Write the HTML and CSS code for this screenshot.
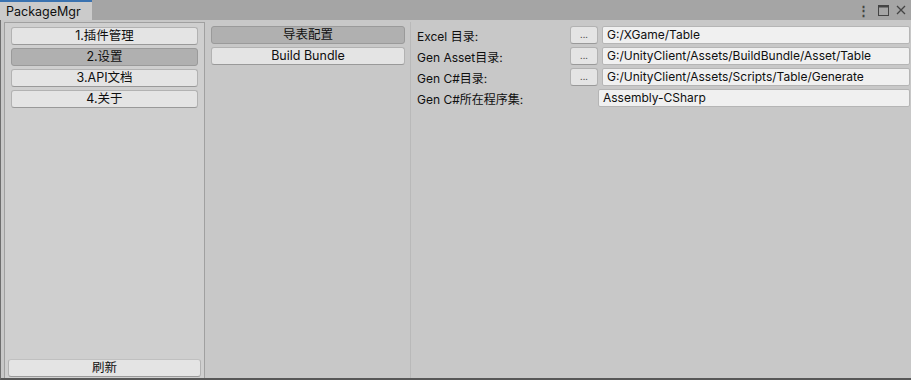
FILE: index.html
```html
<!DOCTYPE html>
<html lang="zh-CN">
<head>
    <meta charset="UTF-8">
    <title>PackageMgr</title>
    <link rel="stylesheet" href="styles.css">
</head>
<body>
    <div class="window">
        <div class="tab-bar">
            <div class="tab">PackageMgr</div>
            <div class="tab-tools">
                <span class="tool-dots">⋮</span>
                <svg class="tool-icon" width="11" height="11" viewBox="0 0 11 11">
                    <rect x="0.5" y="0.5" width="10" height="10" fill="none" stroke="#444" stroke-width="1"/>
                    <rect x="0.5" y="0.5" width="10" height="2" fill="#444"/>
                </svg>
                <svg class="tool-icon" width="10" height="10" viewBox="0 0 10 10">
                    <path d="M1 1 L9 9 M9 1 L1 9" stroke="#444" stroke-width="1.3"/>
                </svg>
            </div>
        </div>

        <div class="content">
            <div class="side-panel">
                <div class="menu">
                    <button class="btn">1.插件管理</button>
                    <button class="btn active">2.设置</button>
                    <button class="btn">3.API文档</button>
                    <button class="btn">4.关于</button>
                </div>
                <button class="btn refresh">刷新</button>
            </div>

            <div class="sub-panel">
                <button class="btn active">导表配置</button>
                <button class="btn">Build Bundle</button>
            </div>

            <div class="settings">
                <div class="row">
                    <span class="label">Excel 目录:</span>
                    <button class="btn dots">...</button>
                    <div class="field">G:/XGame/Table</div>
                </div>
                <div class="row">
                    <span class="label">Gen Asset目录:</span>
                    <button class="btn dots">...</button>
                    <div class="field">G:/UnityClient/Assets/BuildBundle/Asset/Table</div>
                </div>
                <div class="row">
                    <span class="label">Gen C#目录:</span>
                    <button class="btn dots">...</button>
                    <div class="field">G:/UnityClient/Assets/Scripts/Table/Generate</div>
                </div>
                <div class="row">
                    <span class="label wide">Gen C#所在程序集:</span>
                    <div class="field">Assembly-CSharp</div>
                </div>
            </div>
        </div>
    </div>
</body>
</html>
```

FILE: styles.css
```css
* {
    box-sizing: border-box;
}

body {
    margin: 0;
    width: 911px;
    height: 380px;
    overflow: hidden;
    font-family: Inter, 'Noto Sans', 'Noto Sans CJK SC', sans-serif;
    font-size: 12px;
    color: #0f0f0f;
    background: #a5a5a5;
}

.window {
    height: 380px;
    display: flex;
    flex-direction: column;
}

/* tab strip */
.tab-bar {
    height: 20px;
    display: flex;
    justify-content: space-between;
    background: #a5a5a5;
}

.tab {
    width: 92px;
    padding: 3px 0 0 6px;
    background: #cbcbcb;
    border-top: 2px solid #3a72b0;
    font-size: 12.5px;
    line-height: 14px;
}

.tab-tools {
    display: flex;
    align-items: center;
    gap: 7px;
    padding-right: 5px;
}

.tool-dots {
    font-size: 13px;
    color: #444;
    font-weight: bold;
    margin-right: 1px;
}

/* main area */
.content {
    flex: 1;
    display: flex;
    background: #c8c8c8;
    border-left: 1px solid #6e6e6e;
    border-bottom: 2px solid #575757;
    padding-top: 2px;
}

.side-panel {
    width: 201px;
    margin-left: 3px;
    background: #cfcfcf;
    border: 1px solid #a0a0a0;
    border-bottom: none;
    display: flex;
    flex-direction: column;
    justify-content: space-between;
    padding: 4px 6px 0 6px;
}

.menu {
    display: flex;
    flex-direction: column;
    gap: 3px;
}

.btn {
    height: 18px;
    padding: 0;
    font-family: inherit;
    font-size: 12.5px;
    color: #0f0f0f;
    background: #e4e4e4;
    border: 1px solid #b2b2b2;
    border-bottom-color: #999;
    border-radius: 3px;
    line-height: 16px;
}

.btn.active {
    background: #b0b0b0;
    border-color: #9a9a9a;
}

.refresh {
    margin: 0 -3px 1px -3px;
    border-top-color: #c0c0c0;
}

.sub-panel {
    width: 206px;
    display: flex;
    flex-direction: column;
    gap: 3px;
    padding: 4px 5px 0 6px;
    border-right: 1px solid #b9b9b9;
}

.settings {
    flex: 1;
    padding: 4px 1px 0 6px;
    display: flex;
    flex-direction: column;
    gap: 3px;
}

.row {
    display: flex;
    align-items: center;
    height: 18px;
}

.label {
    width: 153px;
    white-space: nowrap;
}

.label.wide {
    width: 181px;
}

.dots {
    width: 28px;
    font-size: 9px;
    color: #555;
    margin-right: 4px;
}

.field {
    flex: 1;
    height: 18px;
    line-height: 16px;
    padding: 0 4px;
    background: #f0f0f0;
    border: 1px solid #b5b5b5;
    border-radius: 2px;
    white-space: nowrap;
    overflow: hidden;
}
```
